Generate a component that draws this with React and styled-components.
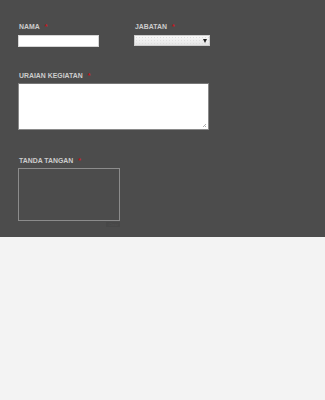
import React from "react";
import styled, { createGlobalStyle } from "styled-components";

const Global = createGlobalStyle`
  html, body { margin: 0; padding: 0; background: #f3f3f3; }
  body { font-family: "Liberation Sans", Arial, sans-serif; }
`;

const Panel = styled.form`
  background: #4c4c4c;
  height: 237px;
  box-sizing: border-box;
  padding: 23px 18px 0 18px;
  display: flex;
  flex-direction: column;
`;

const Row = styled.div`
  display: flex;
  gap: ${(p) => p.$gap || 0}px;
  margin-bottom: ${(p) => p.$mb || 0}px;
`;

const Field = styled.div`
  display: flex;
  flex-direction: column;
  width: ${(p) => p.$w}px;
`;

const Label = styled.label`
  font-size: 6.9px;
  font-weight: bold;
  color: #cdcdcd;
  line-height: 8px;
  height: 8px;
  padding-left: 1px;
  margin-bottom: ${(p) => p.$mb || 4}px;
  white-space: nowrap;
`;

const Req = styled.span`
  color: #d0121b;
  margin-left: 5px;
`;

const TextInput = styled.input`
  box-sizing: border-box;
  width: 81px;
  height: 12px;
  border: 1px solid #d6d6d6;
  background: #fff;
  padding: 0;
  margin: 0;
  outline: none;
`;

const Select = styled.div`
  box-sizing: border-box;
  width: 76px;
  height: 11px;
  border: 1px solid #cdcdcd;
  background: radial-gradient(circle, #dedede 0.5px, transparent 0.8px) 0 0 / 3px 3px,
    linear-gradient(#fafafa, #e4e4e4);
  display: flex;
  align-items: center;
  justify-content: flex-end;
  padding-right: 2px;
`;

const Arrow = styled.span`
  width: 0;
  height: 0;
  border-left: 2px solid transparent;
  border-right: 2px solid transparent;
  border-top: 4px solid #222;
`;

const TextArea = styled.div`
  position: relative;
  box-sizing: border-box;
  width: 191px;
  height: 47px;
  background: #fff;
  border: 1px solid #8a8a8a;
  border-top-color: #777;
`;

const Grip = styled.svg`
  position: absolute;
  right: 1px;
  bottom: 1px;
`;

const SigWrap = styled.div`
  display: flex;
  flex-direction: column;
  align-items: flex-end;
  width: 102px;
`;

const SigBox = styled.div`
  box-sizing: border-box;
  width: 102px;
  height: 53px;
  border: 1px solid #8c8c8c;
`;

const Clear = styled.span`
  font-size: 4px;
  line-height: 5px;
  color: #525252;
  background: #474747;
  padding: 0 2px;
  margin-top: 1px;
`;

export default function App() {
  return (
    <>
      <Global />
      <Panel>
        <Row $gap={35} $mb={25}>
          <Field $w={81}>
            <Label>
              NAMA<Req>*</Req>
            </Label>
            <TextInput />
          </Field>
          <Field $w={76}>
            <Label>
              JABATAN<Req>*</Req>
            </Label>
            <Select>
              <Arrow />
            </Select>
          </Field>
        </Row>
        <Row $mb={27}>
          <Field $w={191}>
            <Label $mb={3}>
              URAIAN KEGIATAN<Req>*</Req>
            </Label>
            <TextArea>
              <Grip width="5" height="5" viewBox="0 0 5 5">
                <path d="M4 1 L1 4 M4 3 L3 4" stroke="#999" strokeWidth="0.8" />
              </Grip>
            </TextArea>
          </Field>
        </Row>
        <Row>
          <Field $w={102}>
            <Label $mb={3}>
              TANDA TANGAN<Req>*</Req>
            </Label>
            <SigWrap>
              <SigBox />
              <Clear>Clear</Clear>
            </SigWrap>
          </Field>
        </Row>
      </Panel>
    </>
  );
}
